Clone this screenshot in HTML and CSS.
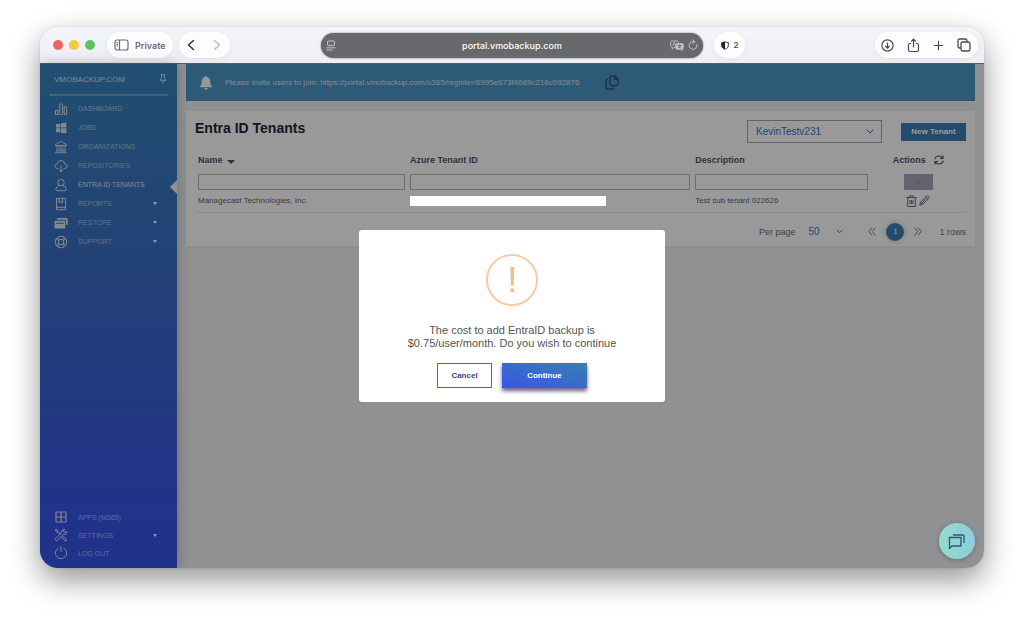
FILE: index.html
```html
<!DOCTYPE html>
<html lang="en">
<head>
    <meta charset="UTF-8">
    <title>Entra ID Tenants</title>
    <link rel="stylesheet" href="styles.css">
</head>
<body>

<div class="window">
    <header class="toolbar">
        <div class="toolbar-left">
            <span class="dot red"></span>
            <span class="dot yellow"></span>
            <span class="dot green"></span>
            <button class="pill private">
                <svg width="15" height="12" viewBox="0 0 15 12" fill="none" stroke="currentColor" stroke-width="1.2"><rect x="1" y="1" width="13" height="10" rx="2"/><path d="M5.5 1v10M2.5 3.5h1.5M2.5 5.3h1.5M2.5 7h1.5"/></svg>
                Private
            </button>
            <div class="pill nav">
                <button aria-label="Back"><svg width="8" height="12" viewBox="0 0 8 12" fill="none" stroke="#333" stroke-width="1.5" stroke-linecap="round" stroke-linejoin="round"><path d="M6.5 1.5 1.5 6l5 4.5"/></svg></button>
                <button aria-label="Forward"><svg width="8" height="12" viewBox="0 0 8 12" fill="none" stroke="#b8b8bc" stroke-width="1.3" stroke-linecap="round" stroke-linejoin="round"><path d="m1.5 1.5 5 4.5-5 4.5"/></svg></button>
            </div>
        </div>
        <div class="address">
            <svg width="10" height="11" viewBox="0 0 10 11" fill="none" stroke="currentColor"><rect x="1.5" y="1" width="7" height="4.5" rx="1"/><path d="M.5 7.8h9M.5 10h6"/></svg>
            <span class="url">portal.vmobackup.com</span>
            <svg width="14" height="11" viewBox="0 0 14 11" fill="none" stroke="currentColor" stroke-width=".9"><path d="M5.5 7.5H4L2.2 9V7.3C1.2 7 .7 6.4.7 5.6V2.8C.7 1.6 1.4 1 2.5 1h4.3c1.1 0 1.8.6 1.8 1.8M2.8 6 4.3 2.3 5.4 5"/><path fill="currentColor" d="M7.5 3.5h4c1.2 0 1.8.6 1.8 1.6v2.6c0 .8-.4 1.3-1.2 1.5v1.3l-1.6-1.2h-3C6.400 9.300 5.800 8.700 5.800 7.700V5.100c0-1 .6-1.600 1.700-1.600z"/><path stroke="#68696b" d="M7.500 5.300h4M9.500 4.500v.8M8 8c1.500-.5 2.300-1.500 2.500-2.700M8.500 6.200c.4.900 1.200 1.500 2.300 1.800"/></svg>
            <svg width="10" height="12" viewBox="0 0 10 12" fill="none" stroke="currentColor"><path d="M8.900 5.800a3.900 3.900 0 1 1-2.400-3M4.600.7l2.300 2-2 2.100" stroke-linecap="round"/></svg>
        </div>
        <div class="toolbar-right">
            <button class="pill shield">
                <svg width="8" height="9" viewBox="0 0 8 9"><path d="M4 .8C5 1.300 6 1.500 7.300 1.600v3C7.300 6.500 6 7.600 4 8.300 2 7.600.7 6.500.7 4.600v-3C2 1.500 3 1.300 4 .8z" fill="none" stroke="#222" stroke-width=".9"/><path d="M4 .8v7.500C2 7.600.7 6.500.7 4.600v-3C2 1.500 3 1.300 4 .8z" fill="#222"/></svg>
                2
            </button>
            <div class="pill tools">
                <button aria-label="Downloads"><svg width="13" height="13" viewBox="0 0 13 13" fill="none" stroke="currentColor" stroke-width="1.2"><circle cx="6.500" cy="6.500" r="5.600"/><path d="M6.500 3.500v5.500M4.300 7l2.200 2.200L8.700 7"/></svg></button>
                <button aria-label="Share"><svg width="13" height="15" viewBox="0 0 13 15" fill="none" stroke="currentColor" stroke-width="1.2"><path d="M4 5.500H3A1.500 1.500 0 0 0 1.500 7v5A1.500 1.500 0 0 0 3 13.500h7a1.500 1.500 0 0 0 1.500-1.500V7A1.500 1.500 0 0 0 10 5.500H9M6.500 9.500V1.300M4.200 3.400l2.300-2.300 2.300 2.300"/></svg></button>
                <button aria-label="New tab"><svg width="11" height="11" viewBox="0 0 11 11" fill="none" stroke="currentColor" stroke-width="1.200"><path d="M5.500.8v9.400M.8 5.500h9.400"/></svg></button>
                <button aria-label="Tabs"><svg width="14" height="14" viewBox="0 0 14 14" fill="none" stroke="currentColor" stroke-width="1.300"><rect x="4" y="4" width="9" height="9" rx="1.800"/><path d="M4 10H2.800A1.800 1.800 0 0 1 1 8.200V2.800A1.800 1.800 0 0 1 2.800 1h5.400A1.800 1.800 0 0 1 10 2.800V4"/></svg></button>
            </div>
        </div>
    </header>

    <div class="page">
        <nav class="sidebar">
            <div class="brand">
                VMOBACKUP.COM
                <svg width="8" height="10" viewBox="0 0 8 10" fill="none" stroke="currentColor" stroke-width=".9"><path d="M1.800.7h4.400M2.500.7v3.600L1 6.300h6L5.500 4.300V.7M4 6.300v3.500"/></svg>
            </div>
            <ul class="menu">
                <li><a href="#">
                    <svg viewBox="0 0 14 14" fill="none" stroke="currentColor" stroke-width="1"><rect x="1.500" y="8.500" width="2.500" height="4"/><rect x="5.700" y="2" width="2.800" height="10.500" rx=".8"/><rect x="10.200" y="5" width="2.500" height="7.500"/></svg>
                    DASHBOARD</a></li>
                <li><a href="#">
                    <svg viewBox="0 0 14 14" fill="currentColor"><path d="M2 3.200 6.200 2.500v4H2zM6.900 2.400l5.400-.8v4.900H6.900zM2 7.300h4.200v4.200L2 10.900zM6.900 7.300h5.400v5.100l-5.400-.8z"/></svg>
                    JOBS</a></li>
                <li><a href="#">
                    <svg viewBox="0 0 14 14" fill="none" stroke="currentColor" stroke-width=".9"><path d="M1.500 4.500 7 1.300l5.500 3.200v1h-11zM1 12.700h12M2 11h10M3 5.500V11M5 5.500V11M8.900 5.500V11M11 5.500V11M7 5.500V11"/></svg>
                    ORGANIZATIONS</a></li>
                <li><a href="#">
                    <svg viewBox="0 0 14 14" fill="none" stroke="currentColor" stroke-width="1"><path d="M4.500 9.500H3.700C2 9.500 1 8.500 1 7.200 1 6 1.900 5.100 3.100 5 3.300 2.900 4.900 1.600 7 1.600s3.600 1.300 3.900 3.300c1.200.2 2.100 1.100 2.100 2.300 0 1.300-1 2.300-2.500 2.300h-1M7 6.500v6M5 10.700l2 2 2-2"/></svg>
                    REPOSITORIES</a></li>
                <li class="active"><a href="#">
                    <svg viewBox="0 0 14 14" fill="none" stroke="currentColor" stroke-width="1"><circle cx="7" cy="4.500" r="3.200"/><path d="M5 7.500C3 8.200 2 9.500 2 11.500c0 .8.400 1.200 1.200 1.200h7.600c.8 0 1.200-.4 1.200-1.200 0-2-1-3.300-3-4"/></svg>
                    ENTRA ID TENANTS</a></li>
                <li><a href="#">
                    <svg viewBox="0 0 14 14" fill="none" stroke="currentColor" stroke-width="1"><path d="M2.500 1.300h9v11.400h-9zM2.500 10.300h9M5 1.300v4.500l1.700-1.300 1.700 1.300V1.300"/></svg>
                    REPORTS<span class="caret"></span></a></li>
                <li><a href="#">
                    <svg viewBox="0 0 14 14" fill="currentColor"><path d="M4 2h8.500A1.200 1.200 0 0 1 13.700 3.200v4.600A1.200 1.200 0 0 1 12.500 9h-.6V4.900A1.200 1.200 0 0 0 10.700 3.700H3v-.6C3 2.500 3.400 2 4 2z"/><path fill-rule="evenodd" d="M1.500 4.700h8.700a1 1 0 0 1 1 1v5.800a1 1 0 0 1-1 1H1.500a1 1 0 0 1-1-1V5.700a1 1 0 0 1 1-1zM2 6.700v1.100h7.700V6.700z"/></svg>
                    RESTORE<span class="caret"></span></a></li>
                <li><a href="#">
                    <svg viewBox="0 0 14 14" fill="none" stroke="currentColor" stroke-width="1"><circle cx="7" cy="7" r="5.800"/><circle cx="7" cy="7" r="2.700"/><path d="m2.200 3.800 2.500 1.600M3.800 2.200l1.600 2.500M11.800 3.800 9.300 5.400M10.200 2.200 8.600 4.700M2.200 10.200l2.500-1.600M3.800 11.800l1.600-2.500M11.800 10.200 9.300 8.600M10.200 11.800 8.600 9.300"/></svg>
                    SUPPORT<span class="caret"></span></a></li>
            </ul>
            <ul class="menu menu-bottom">
                <li><a href="#">
                    <svg viewBox="0 0 14 14" fill="none" stroke="currentColor" stroke-width="1.200"><rect x="2" y="2" width="10" height="10" rx=".8"/><path d="M7 2v10M2 7h10"/></svg>
                    APPS (M365)</a></li>
                <li><a href="#">
                    <svg viewBox="0 0 14 14" fill="none" stroke="currentColor" stroke-width="1"><path d="M1.500 1.500 3.500 2l.5 1.300 2.500 2.500M8.200 7.700l4 3.700c.9.900-.4 2.100-1.300 1.300L7.200 8.700M12.700 3.200 11 4.900 9.200 3.200l1.600-1.800C8.700.8 7 2.500 7.600 4.600L1.700 10.500c-1.200 1.300.6 3 1.800 1.800l5.900-5.900c2.100.6 3.800-1.100 3.300-3.200zM1.500 1.500l.6 2 1.300.5 2.300 2.400"/></svg>
                    SETTINGS<span class="caret"></span></a></li>
                <li><a href="#">
                    <svg viewBox="0 0 14 14" fill="none" stroke="currentColor" stroke-width="1"><path d="M4.500 2a5.600 5.600 0 1 0 5 0M7 .5v5"/></svg>
                    LOG OUT</a></li>
            </ul>
        </nav>

        <main class="content">
            <div class="banner">
                <svg class="bell" width="12" height="14" viewBox="0 0 12 14" fill="currentColor"><path d="M6 0c.6 0 1 .4 1 1 2 .4 3.200 2 3.200 4.200 0 3 .6 4 1.800 5.300v.7H0v-.7c1.200-1.300 1.800-2.300 1.800-5.300C1.800 3 3 1.400 5 1c0-.6.400-1 1-1zM4.300 12h3.400c0 1-.7 1.700-1.700 1.700S4.300 13 4.300 12z"/></svg>
                <span>Please invite users to join: https://portal.vmobackup.com/o365/register/6995e673f4689c218c092876</span>
                <button class="copy" aria-label="Copy link"><svg width="14" height="15" viewBox="0 0 14 15" fill="none" stroke="currentColor" stroke-width="1.300"><path d="M6.500 1H10l3 3v5a1.500 1.500 0 0 1-1.500 1.500h-5A1.500 1.500 0 0 1 5 9V2.500A1.500 1.500 0 0 1 6.500 1zM10 1v3h3M3 4.500h-.5A1.500 1.500 0 0 0 1 6v6.500A1.500 1.500 0 0 0 2.500 14h5A1.500 1.500 0 0 0 9 12.500"/></svg></button>
            </div>

            <section class="card">
                <div class="card-header">
                    <h1>Entra ID Tenants</h1>
                    <div class="select org-select">
                        <select aria-label="Organization"><option>KevinTestv231</option></select>
                        <svg width="8" height="5" viewBox="0 0 8 5" fill="none" stroke="currentColor"><path d="m.7.7 3.300 3.300L7.300.7"/></svg>
                    </div>
                    <button class="new-tenant">New Tenant</button>
                </div>

                <table>
                    <colgroup>
                        <col class="col-name">
                        <col class="col-id">
                        <col class="col-desc">
                        <col class="col-actions">
                    </colgroup>
                    <thead>
                        <tr>
                            <th>Name <span class="sort"></span></th>
                            <th>Azure Tenant ID</th>
                            <th>Description</th>
                            <th class="actions"><div class="action-row head">Actions
                                <button aria-label="Refresh"><svg width="10" height="10" viewBox="0 0 10 10" fill="none" stroke="currentColor" stroke-width="1.200"><path d="M.8 4.300C1.200 2.300 2.800 1 4.900 1c1.500 0 2.800.7 3.700 2M9 .5v3H6M9.200 5.700C8.800 7.700 7.200 9 5.100 9c-1.500 0-2.800-.7-3.700-2M1 9.500v-3h3"/></svg></button>
                            </div></th>
                        </tr>
                    </thead>
                    <tbody>
                        <tr class="filters">
                            <td><input type="text" aria-label="Filter by name"></td>
                            <td><input type="text" aria-label="Filter by tenant ID"></td>
                            <td><input type="text" aria-label="Filter by description"></td>
                            <td class="actions"><button class="clear" aria-label="Clear filters"><svg width="8" height="8" viewBox="0 0 8 8" stroke="currentColor"><path d="m1 1 6 6M7 1 1 7"/></svg></button></td>
                        </tr>
                        <tr class="row">
                            <td>Managecast Technologies, Inc.</td>
                            <td><div class="hidden-id"></div></td>
                            <td>Test sub tenant 022626</td>
                            <td class="actions"><div class="action-row">
                                <button aria-label="Delete"><svg width="11" height="12" viewBox="0 0 11 12" fill="none" stroke="currentColor" stroke-width=".9"><path d="M.5 2.500h10M3.700 2.500V.8h3.600v1.700M1.700 2.500v9h7.600v-9M4 5v4M5.500 5v4M7 5v4"/></svg></button>
                                <button aria-label="Edit"><svg width="11" height="11" viewBox="0 0 11 11" fill="none" stroke="currentColor" stroke-width=".9"><path d="m.8 10.200.7-3L7.700 1c1.200-1 3.200.9 2.200 2.200L3.700 9.500zM6.700 2l2.200 2.200M1.500 7.200l2.200 2.300M2.700 8.300l5-5"/></svg></button>
                            </div></td>
                        </tr>
                    </tbody>
                </table>

                <div class="pager">
                    <label for="perPage">Per page</label>
                    <div class="select page-select">
                        <select id="perPage"><option>50</option></select>
                        <svg width="7" height="5" viewBox="0 0 7 5" fill="none" stroke="currentColor"><path d="m.6.8 2.900 2.900L6.400.8"/></svg>
                    </div>
                    <button aria-label="Previous page"><svg width="8" height="9" viewBox="0 0 8 9" fill="none" stroke="currentColor" stroke-width=".9"><path d="m4 .6-3.200 3.900L4 8.400M7.400.6 4.200 4.500l3.200 3.900"/></svg></button>
                    <button class="current">1</button>
                    <button aria-label="Next page"><svg width="8" height="9" viewBox="0 0 8 9" fill="none" stroke="currentColor" stroke-width=".9"><path d="m.6.6 3.200 3.900L.6 8.400M4 .6l3.200 3.900L4 8.400"/></svg></button>
                    <span class="total">1 rows</span>
                </div>
            </section>
        </main>

        <div class="backdrop">
            <div class="modal" role="dialog" aria-labelledby="message">
                <svg class="warning" width="52" height="52" viewBox="0 0 52 52"><circle cx="26" cy="26" r="25" fill="none" stroke="#f3cda6" stroke-width="2"/><path d="M24.300 13h4l-.7 18.500h-2.600zM24.500 34.500h3.600V38h-3.600z" fill="#f0bd88"/></svg>
                <p id="message">The cost to add EntraID backup is<br>$0.75/user/month. Do you wish to continue</p>
                <div class="modal-buttons">
                    <button class="cancel">Cancel</button>
                    <button class="continue">Continue</button>
                </div>
            </div>
        </div>

        <button class="chat" aria-label="Open chat"><svg width="18" height="17" viewBox="0 0 18 17" fill="none" stroke="currentColor" stroke-width="1.300" stroke-linejoin="round"><path d="M1.500 4.500h11.500v8.500H4l-2.500 2.500zM5 2h9.500A1.500 1.500 0 0 1 16 3.500V10"/></svg></button>
    </div>
</div>

</body>
</html>
```
FILE: styles.css
```css
* {
    box-sizing: border-box;
}

body {
    margin: 0;
    padding: 27px 40px 52px;
    min-height: 100vh;
    display: flex;
    background: #fff;
    font-family: "Liberation Sans", Arial, sans-serif;
    font-size: 9px;
    color: #50536b;
}

button {
    display: flex;
    align-items: center;
    justify-content: center;
    margin: 0;
    padding: 0;
    border: none;
    background: none;
    font: inherit;
    color: inherit;
    cursor: pointer;
}

svg {
    display: block;
    flex: none;
}

.window {
    flex: 1;
    display: flex;
    flex-direction: column;
    border-radius: 18px;
    overflow: hidden;
    box-shadow: 0 0 1px rgba(0, 0, 0, 0.4), 0 12px 30px rgba(0, 0, 0, 0.42);
}

/* browser toolbar */
.toolbar {
    display: grid;
    grid-template-columns: 1fr 382px 1fr;
    align-items: center;
    height: 36px;
    background: linear-gradient(#f5f6fb, #eeeff4);
    font-family: Inter, sans-serif;
    color: #4a4a4d;
}

.toolbar-left,
.toolbar-right {
    display: flex;
    align-items: center;
}

.toolbar-left {
    gap: 6px;
    padding-left: 13px;
}

.toolbar-right {
    justify-content: space-between;
    padding: 0 6px 0 11px;
}

.dot {
    width: 10px;
    height: 10px;
    border-radius: 50%;
}

.red {
    background: #ee6560;
}

.yellow {
    background: #f2c940;
}

.green {
    background: #61c263;
}

.pill {
    height: 26px;
    border-radius: 13px;
    background: #fdfdff;
    box-shadow: 0 1px 6px rgba(0, 0, 0, 0.06);
}

.private {
    gap: 6px;
    margin-left: 6px;
    padding: 0 7px;
    font-size: 9px;
    font-weight: 600;
    color: #6b6b6f;
}

.nav {
    display: flex;
    width: 51px;
}

.nav button {
    flex: 1;
}

.address {
    display: flex;
    align-items: center;
    gap: 4px;
    height: 25px;
    padding: 0 5px;
    border-radius: 13px;
    background: #68696b;
    box-shadow: 0 0 2px #68696b;
    color: #c4c4c6;
}

.url {
    flex: 1;
    padding-left: 18px;
    text-align: center;
    font-size: 9px;
    font-weight: 500;
    color: #fff;
}

.shield {
    gap: 5px;
    width: 31px;
    font-size: 8px;
    font-weight: 600;
}

.tools {
    display: flex;
    align-items: center;
    justify-content: space-between;
    width: 103px;
    padding: 0 7px 0 6px;
}

/* portal page */
.page {
    position: relative;
    flex: 1;
    display: flex;
    border-top: 1px solid #36658a;
    background: #f0f2f5;
}

.sidebar {
    display: flex;
    flex-direction: column;
    width: 137px;
    background: linear-gradient(#3883bd, #3a6fc4 38%, #3854e8 90%);
    box-shadow: 0 0 12px rgba(0, 0, 0, 0.25);
    color: rgba(255, 255, 255, 0.8);
}

.brand {
    display: flex;
    align-items: center;
    justify-content: space-between;
    height: 32px;
    margin: 0 9px 3px;
    padding: 0 1px 0 5px;
    border-bottom: 2px solid rgba(255, 255, 255, 0.3);
    font-size: 8px;
}

.menu {
    margin: 0;
    padding: 0;
    list-style: none;
}

.menu li {
    position: relative;
}

.menu a {
    display: flex;
    align-items: center;
    gap: 10px;
    height: 19px;
    padding: 0 20px 0 14px;
    font-size: 7px;
    color: rgba(255, 255, 255, 0.55);
    text-decoration: none;
}

.menu svg {
    width: 14px;
    height: 14px;
    color: rgba(255, 255, 255, 0.8);
}

.menu .active a {
    color: rgba(255, 255, 255, 0.8);
}

.active::after {
    content: '';
    position: absolute;
    right: 0;
    top: 5px;
    border: 7px solid transparent;
    border-left: none;
    border-right-color: #f0f2f5;
}

.caret,
.sort {
    border: 2px solid transparent;
    border-top: 3px solid currentColor;
    border-bottom: none;
}

.caret {
    margin-left: auto;
    color: #fff;
}

.menu-bottom {
    margin-top: auto;
    padding-bottom: 6px;
}

.menu-bottom a {
    height: 18px;
}

.content {
    flex: 1;
    padding: 0 9px;
}

.banner {
    display: flex;
    align-items: center;
    height: 37px;
    padding: 0 14px;
    background: #4b96c6;
    font-size: 8px;
    color: rgba(255, 255, 255, 0.8);
}

.bell {
    margin-right: 13px;
    color: #fff;
}

.copy {
    margin-left: 26px;
    color: #2c4a88;
}

.card {
    margin-top: 10px;
    padding: 9px;
    padding-bottom: 5px;
    background: #fff;
    box-shadow: 0 2px 8px rgba(0, 0, 0, 0.04);
}

.card-header {
    display: flex;
    align-items: center;
    gap: 19px;
}

h1 {
    flex: 1;
    align-self: flex-start;
    margin: 0;
    font-size: 14px;
    line-height: 16px;
    color: #22253f;
}

.select {
    display: grid;
    align-items: center;
    color: #3079b5;
}

.select select,
.select svg {
    grid-area: 1 / 1;
}

.select svg {
    justify-self: end;
    pointer-events: none;
}

select {
    appearance: none;
    width: 100%;
    margin: 0;
    border: none;
    border-radius: 0;
    background: none;
    font: inherit;
    font-size: 10px;
    color: inherit;
}

.org-select {
    width: 135px;
}

.org-select select {
    height: 23px;
    padding: 0 8px;
    border: 1px solid #a4a5b0;
}

.org-select svg {
    margin-right: 8px;
}

.new-tenant {
    width: 65px;
    height: 18px;
    background: #3a7db8;
    font-size: 8px;
    font-weight: bold;
    color: #fff;
}

table {
    width: 100%;
    table-layout: fixed;
    border-collapse: collapse;
}

.col-name {
    width: 27.5%;
}

.col-id {
    width: 37%;
}

.col-desc {
    width: 23%;
}

.col-actions {
    width: 12.5%;
}

th,
td {
    padding: 0 2px 0 3px;
    text-align: left;
}

th {
    height: 31px;
    padding-top: 3px;
}

.sort {
    display: inline-block;
    margin-left: 2px;
    border-width: 4px 4px 0;
    vertical-align: -1px;
}

.action-row {
    display: flex;
    align-items: center;
    justify-content: center;
    gap: 2px;
}

.head {
    gap: 8px;
}

input {
    display: block;
    width: 100%;
    height: 16px;
    border: 1px solid #b4b5bd;
    background: #fff;
    font: inherit;
}

.clear {
    width: 29px;
    height: 16px;
    margin: 0 auto;
    background: #a5a6bc;
    color: #8e90a6;
}

.row td {
    height: 22px;
    border-bottom: 1px solid #ebebef;
    font-size: 8px;
    color: #5c5f76;
}

/* the tenant id is masked out */
.hidden-id {
    position: relative;
    z-index: 2;
    width: 70%;
    height: 10px;
    background: #fff;
}

.pager {
    display: flex;
    align-items: center;
    justify-content: flex-end;
    height: 28px;
    padding-top: 10px;
    color: #6a6c80;
}

.page-select {
    width: 35px;
    margin: 0 25px 0 13px;
}

.page-select select {
    padding: 0;
}

.current {
    width: 18px;
    height: 18px;
    margin: 0 10px;
    border-radius: 50%;
    background: #3a7db8;
    box-shadow: 0 0 6px rgba(0, 0, 0, 0.2);
    font-size: 8px;
    color: #fff;
}

.total {
    margin-left: 17px;
}

/* confirmation dialog */
.backdrop {
    position: absolute;
    inset: 0;
    z-index: 1;
    display: flex;
    align-items: center;
    justify-content: center;
    background: rgba(0, 0, 0, 0.4);
}

.modal {
    display: flex;
    flex-direction: column;
    align-items: center;
    width: 306px;
    padding: 24px 16px 14px;
    border-radius: 3px;
    background: #fff;
}

.modal p {
    margin: 18px 0 13px;
    text-align: center;
    font-size: 11px;
    line-height: 13px;
    color: #545454;
}

.modal-buttons {
    display: flex;
    align-items: center;
    gap: 10px;
}

.modal-buttons button {
    height: 25px;
    font-size: 8px;
    font-weight: bold;
}

.cancel {
    width: 55px;
    border: 1px solid #5a6496;
    color: #3c4676;
}

.continue {
    width: 85px;
    background: linear-gradient(to top right, #3a56e6, #367fb2);
    box-shadow: 0 3px 4px rgba(40, 30, 90, 0.7);
    color: #fff;
}

.chat {
    position: absolute;
    right: 9px;
    bottom: 9px;
    z-index: 3;
    width: 36px;
    height: 36px;
    border-radius: 50%;
    background: linear-gradient(to right, #93dccb, #8ccbdc);
    box-shadow: 0 1px 5px rgba(0, 0, 0, 0.25);
    color: #35526b;
}
```
